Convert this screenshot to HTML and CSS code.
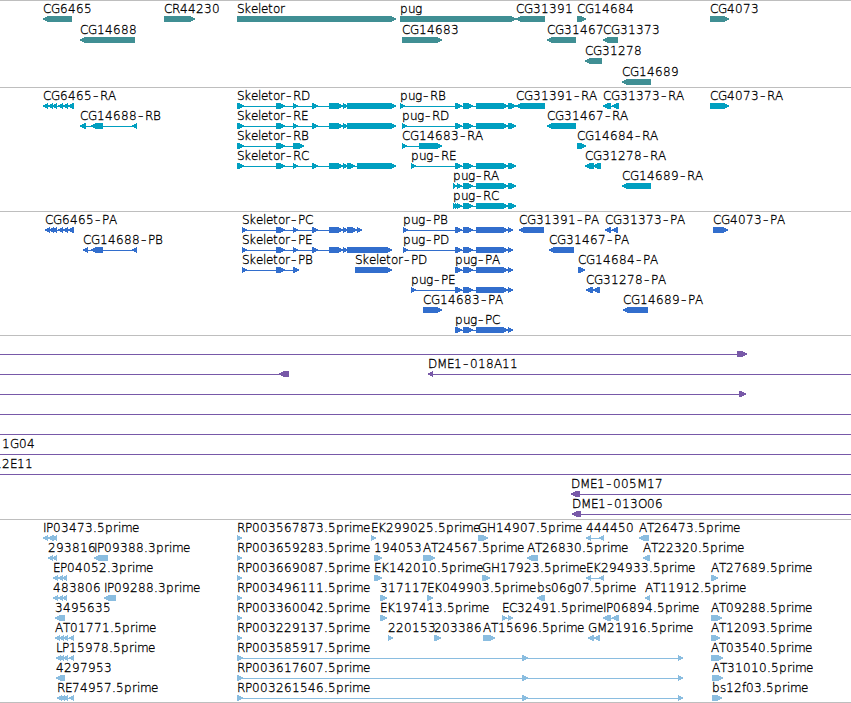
FILE: index.html
```
<!DOCTYPE html>
<html lang="en">
<head>
    <meta charset="UTF-8">
    <meta name="viewport" content="width=device-width, initial-scale=1.0">
    <title>Genome browser</title>
    <link rel="stylesheet" href="styles.css">
</head>
<body>
    <main class="browser">
        <section class="track genes"><svg id="genes" width="851" height="86"></svg></section>
        <section class="track transcripts"><svg id="transcripts" width="851" height="123"></svg></section>
        <section class="track proteins"><svg id="proteins" width="851" height="123"></svg></section>
        <section class="track clones"><svg id="clones" width="851" height="183"></svg></section>
        <section class="track ests"><svg id="ests" width="851" height="182"></svg></section>
    </main>
    <script src="tracks.js"></script>
</body>
</html>
```
FILE: styles.css
```
body {
    margin: 0;
    background: #fff;
    font-family: "DejaVu Sans", sans-serif;
    font-size: 12px;
}
.browser {
    width: 851px;
    height: 703px;
    overflow: hidden;
}
.track {
    border-top: 1px solid #bebebe;
}
.track:last-child {
    border-bottom: 1px solid #bebebe;
}
.track svg {
    display: block;
}
.genes {
    color: #408f94;
}
.transcripts {
    color: #009fc0;
}
.proteins {
    color: #326ecd;
}
.clones {
    color: #7859a8;
}
.ests {
    color: #8abde0;
}
.block {
    fill: currentColor;
    shape-rendering: crispEdges;
}
.label {
    fill: #000;
    font-weight: 200;
    stroke: #000;
    stroke-width: 0.3px;
}
.dash {
    font-size: 15px;
}
```
FILE: tracks.js
```
// advance of each character in the labels, 8px when not listed
const advances = {
    G: 9, H: 9, D: 9, O: 9, M: 10, P: 7, T: 7, E: 7, S: 7, L: 6, I: 3,
    "-": 8, ".": 4, r: 5, i: 3, m: 11, e: 7, k: 7, l: 3, t: 5, o: 7,
    u: 7, g: 7, s: 6, f: 4
};

// [row, label, strand, blocks, label x (default: first block)]
const genes = [
    [0, "CG6465", "-", [[43, 72]]],
    [0, "CR44230", "+", [[164, 195]]],
    [0, "Skeletor", "+", [[237, 396]]],
    [0, "pug", "+", [[400, 516]]],
    [0, "CG31391", "-", [[516, 545]]],
    [0, "CG14684", "+", [[577, 586]]],
    [0, "CG4073", "+", [[710, 729]]],
    [1, "CG14688", "-", [[80, 135]]],
    [1, "CG14683", "+", [[402, 442]]],
    [1, "CG31467", "-", [[547, 576]]],
    [1, "CG31373", "-", [[603, 618]]],
    [2, "CG31278", "-", [[585, 602]]],
    [3, "CG14689", "-", [[622, 651]]]
];

const skel = [[237, 244], [276, 285], [293, 298], [312, 318], [329, 343], [343, 348]];
const pugEnd = [[455, 462], [463, 473], [476, 508], [508, 516]];
const transcripts = [
    [0, "CG6465-RA", "-", [[43, 48], [48, 53], [52, 57], [58, 63], [63, 68], [68, 74]]],
    [0, "Skeletor-RD", "+", [...skel, [347, 396]]],
    [0, "pug-RB", "+", [[400, 405], ...pugEnd]],
    [0, "CG31391-RA", "-", [[516, 545]]],
    [0, "CG31373-RA", "-", [[603, 611], [612, 619]]],
    [0, "CG4073-RA", "+", [[710, 729]]],
    [1, "CG14688-RB", "-", [[80, 86], [91, 103], [132, 137]]],
    [1, "Skeletor-RE", "+", [...skel, [347, 396]]],
    [1, "pug-RD", "+", [[402, 407], ...pugEnd]],
    [1, "CG31467-RA", "-", [[547, 576]]],
    [2, "Skeletor-RB", "+", [[237, 244], [276, 285], [293, 304]]],
    [2, "CG14683-RA", "+", [[402, 407], [419, 442]]],
    [2, "CG14684-RA", "+", [[577, 586]]],
    [3, "Skeletor-RC", "+", [...skel, [347, 355], [357, 396]]],
    [3, "pug-RE", "+", [[411, 416], ...pugEnd]],
    [3, "CG31278-RA", "-", [[585, 594], [593, 601]]],
    [4, "pug-RA", "+", [[453, 457], [457, 462], [463, 473], [476, 508], [508, 516]]],
    [4, "CG14689-RA", "-", [[622, 651]]],
    [5, "pug-RC", "+", [[453, 457], [455, 460], [457, 462], [463, 473], [476, 508], [508, 516]]]
];

const skelP = [[242, 247], [276, 285], [293, 298], [312, 318], [329, 343], [343, 348]];
const pugP = [[455, 462], [463, 473], [476, 508], [508, 513]];
const proteins = [
    [0, "CG6465-PA", "-", [[45, 50], [49, 54], [52, 57], [58, 63], [63, 68], [68, 74]]],
    [0, "Skeletor-PC", "+", [...skelP, [347, 357], [357, 362]]],
    [0, "pug-PB", "+", [[403, 408], ...pugP]],
    [0, "CG31391-PA", "-", [[519, 544]]],
    [0, "CG31373-PA", "-", [[605, 611], [612, 618]]],
    [0, "CG4073-PA", "+", [[713, 728]]],
    [1, "CG14688-PB", "-", [[83, 88], [91, 103], [132, 137]]],
    [1, "Skeletor-PE", "+", [...skelP, [347, 392]]],
    [1, "pug-PD", "+", [[403, 408], ...pugP]],
    [1, "CG31467-PA", "-", [[549, 574]]],
    [2, "Skeletor-PB", "+", [[242, 247], [276, 285], [293, 299]]],
    [2, "Skeletor-PD", "+", [[355, 392]]],
    [2, "pug-PA", "+", pugP],
    [2, "CG14684-PA", "+", [[578, 585]]],
    [3, "pug-PE", "+", [[411, 416], ...pugP]],
    [3, "CG31278-PA", "-", [[586, 593], [593, 600]]],
    [4, "CG14683-PA", "+", [[423, 442]]],
    [4, "CG14689-PA", "-", [[623, 648]]],
    [5, "pug-PC", "+", pugP]
];

// clones run past the edges of the view
const clones = [
    [0, "", "+", [[-20, -10], [737, 747]]],
    [1, "", "-", [[-20, -10], [279, 289]]],
    [1, "DME1-018A11", "-", [[428, 433], [860, 870]]],
    [2, "", "+", [[-20, -10], [739, 746]]],
    [3, "", "+", [[-20, -10], [860, 870]]],
    [4, "", "+", [[-20, -10], [860, 870]]],
    [5, "1G04", "+", [[-20, -10], [860, 870]], 2],
    [6, "12E11", "+", [[-20, -10], [860, 870]], -6],
    [7, "DME1-005M17", "-", [[571, 580], [860, 870]]],
    [8, "DME1-013O06", "-", [[572, 581], [860, 870]]]
];

const ests = [
    [0, "IP03473.5prime", "-", [[43, 48], [48, 54], [52, 57]]],
    [1, "293816", "-", [[48, 53], [52, 57]]],
    [1, "IP09388.3prime", "-", [[94, 108]]],
    [2, "EP04052.3prime", "-", [[53, 58], [58, 63], [62, 67]]],
    [3, "483806", "-", [[53, 58], [58, 63], [62, 67]]],
    [3, "IP09288.3prime", "-", [[104, 116]]],
    [4, "3495635", "-", [[55, 65]]],
    [5, "AT01771.5prime", "-", [[55, 60], [59, 64], [63, 68], [69, 74]]],
    [6, "LP15978.5prime", "-", [[56, 61], [59, 64], [63, 68], [69, 74]]],
    [7, "4297953", "-", [[56, 65]]],
    [8, "RE74957.5prime", "-", [[57, 62], [60, 65], [63, 68], [69, 74]]],
    [0, "RP003567873.5prime", "+", [[237, 242]]],
    [1, "RP003659283.5prime", "+", [[237, 242]]],
    [2, "RP003669087.5prime", "+", [[237, 242]]],
    [3, "RP003496111.5prime", "+", [[237, 242]]],
    [4, "RP003360042.5prime", "+", [[237, 242]]],
    [5, "RP003229137.5prime", "+", [[237, 242]]],
    [6, "RP003585917.5prime", "+", [[237, 243], [522, 528], [678, 683]]],
    [7, "RP003617607.5prime", "+", [[237, 243], [522, 528], [678, 683]]],
    [8, "RP003261546.5prime", "+", [[237, 243], [522, 528], [678, 683]]],
    [0, "EK299025.5prime", "+", [[371, 376]]],
    [0, "GH14907.5prime", "+", [[478, 488]]],
    [0, "444450", "-", [[586, 591], [599, 604]]],
    [0, "AT26473.5prime", "-", [[639, 649]]],
    [1, "194053", "+", [[374, 382]]],
    [1, "AT24567.5prime", "+", [[423, 435]]],
    [1, "AT26830.5prime", "-", [[527, 538]]],
    [1, "AT22320.5prime", "-", [[643, 650]]],
    [2, "EK142010.5prime", "+", [[374, 382]]],
    [2, "GH17923.5prime", "+", [[482, 490]]],
    [2, "EK294933.5prime", "-", [[586, 591], [599, 604]]],
    [2, "AT27689.5prime", "+", [[711, 718]]],
    [3, "317117", "+", [[380, 387]]],
    [3, "EK049903.5prime", "+", [[427, 433]]],
    [3, "bs06g07.5prime", "-", [[537, 545]]],
    [3, "AT11912.5prime", "-", [[645, 650]]],
    [4, "EK197413.5prime", "+", [[380, 387]]],
    [4, "EC32491.5prime", "+", [[502, 507], [508, 513]]],
    [4, "IP06894.5prime", "-", [[603, 611], [612, 619]]],
    [4, "AT09288.5prime", "+", [[711, 722]]],
    [5, "220153", "+", [[388, 393]]],
    [5, "203386", "+", [[434, 441]]],
    [5, "AT15696.5prime", "+", [[483, 495]]],
    [5, "GM21916.5prime", "-", [[588, 594], [594, 600]]],
    [5, "AT12093.5prime", "+", [[711, 720]]],
    [6, "AT03540.5prime", "+", [[711, 723]]],
    [7, "AT31010.5prime", "+", [[712, 723]]],
    [8, "bs12f03.5prime", "+", [[712, 722]]]
];

function add(parent, name, attrs) {
    const el = document.createElementNS("http://www.w3.org/2000/svg", name);
    for (const key in attrs) {
        el.setAttribute(key, attrs[key]);
    }
    parent.appendChild(el);
    return el;
}

function drawLabel(svg, label, x, y) {
    const text = add(svg, "text", { class: "label", y: y });
    // the dash is wider than the font's own, so it gets a span of its own
    for (const part of label.split(/(-)/)) {
        const xs = [];
        for (const c of part) {
            xs.push(x);
            x += advances[c] || 8;
        }
        const attrs = { x: xs.join(" "), y: y };
        if (part === "-") {
            attrs.class = "dash";
            attrs.x = xs[0] + 1;
            attrs.y = y + 1;
        }
        add(text, "tspan", attrs).textContent = part;
    }
}

function drawTrack(id, features, pitch) {
    const svg = document.getElementById(id);
    for (const [row, label, strand, blocks, labelX] of features) {
        const top = row * pitch + 15;
        const start = blocks[0][0];
        const end = blocks[blocks.length - 1][1];
        if (blocks.length > 1) {
            add(svg, "rect", { class: "block", x: start + 1, y: top + 3, width: end - start - 2, height: 1 });
        }
        for (const [a, b] of blocks) {
            const head = Math.min(5, b - a);
            const points = strand === "+"
                ? [a, top, b - head, top, b, top + 2.6, b, top + 3.4, b - head, top + 6, a, top + 6]
                : [b, top, a + head, top, a, top + 2.6, a, top + 3.4, a + head, top + 6, b, top + 6];
            add(svg, "polygon", { class: "block", points: points.join(" ") });
        }
        if (label) {
            drawLabel(svg, label, labelX === undefined ? start : labelX, top - 3);
        }
    }
}

drawTrack("genes", genes, 21);
drawTrack("transcripts", transcripts, 20);
drawTrack("proteins", proteins, 20);
drawTrack("clones", clones, 20);
drawTrack("ests", ests, 20);
```
